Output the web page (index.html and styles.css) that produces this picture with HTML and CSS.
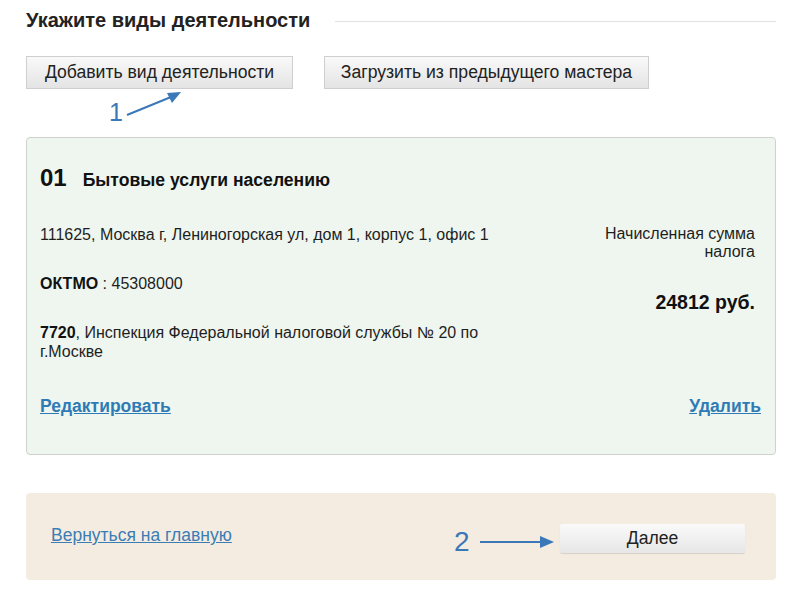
FILE: index.html
```html
<!DOCTYPE html>
<html lang="ru">
<head>
<meta charset="utf-8">
<link rel="stylesheet" href="styles.css">
</head>
<body>
<div class="page">
  <div class="heading">
    <h1 class="title">Укажите виды деятельности</h1>
    <div class="rule"></div>
  </div>
  <div class="actions">
    <button class="btn btn-add">Добавить вид деятельности</button>
    <button class="btn btn-load">Загрузить из предыдущего мастера</button>
  </div>

  <div class="card">
    <div class="card-head">
      <span class="code">01</span>
      <span class="name">Бытовые услуги населению</span>
    </div>
    <div class="card-body">
      <div class="info">
        <p class="line">111625, Москва г, Лениногорская ул, дом 1, корпус 1, офис 1</p>
        <p class="line"><b>ОКТМО</b> : 45308000</p>
        <p class="line"><b>7720</b>, Инспекция Федеральной налоговой службы № 20 по г.Москве</p>
      </div>
      <div class="sum">
        <p class="sum-label">Начисленная сумма<br>налога</p>
        <p class="sum-value">24812 руб.</p>
      </div>
    </div>
    <div class="card-links">
      <a class="link-bold" href="#">Редактировать</a>
      <a class="link-bold" href="#">Удалить</a>
    </div>
  </div>

  <div class="footer">
    <a class="link" href="#">Вернуться на главную</a>
    <button class="btn btn-next">Далее</button>
  </div>

  <div class="note note-1">
    <span class="note-num">1</span>
    <svg class="note-arrow" width="60" height="30" viewBox="0 0 60 30">
      <line x1="2" y1="26" x2="46" y2="8" stroke="#3a78b8" stroke-width="2"/>
      <polygon points="56,3 42,4 47,14" fill="#3a78b8"/>
    </svg>
  </div>
  <div class="note note-2">
    <span class="note-num">2</span>
    <svg class="note-arrow" width="76" height="16" viewBox="0 0 76 16">
      <line x1="0" y1="8" x2="62" y2="8" stroke="#3a78b8" stroke-width="2"/>
      <polygon points="74,8 60,2 60,14" fill="#3a78b8"/>
    </svg>
  </div>
</div>
</body>
</html>
```

FILE: styles.css
```css
* { box-sizing: border-box; }
html, body { margin: 0; padding: 0; background: #fff; }
body {
  font-family: "Liberation Sans", Arial, sans-serif;
  color: #1e1e1e;
}
.page {
  position: relative;
  width: 795px;
  padding: 8px 19px 0 26px;
}
.heading {
  display: flex;
  align-items: center;
  height: 24px;
}
.title {
  margin: 0;
  font-size: 20px;
  line-height: 24px;
  font-weight: bold;
  color: #222;
}
.rule {
  flex: 1;
  margin-left: 25px;
  border-top: 1px solid #e2e2e2;
  margin-top: 2px;
}
.actions {
  display: flex;
  gap: 31px;
  margin-top: 24px;
}
.btn {
  font-family: "Liberation Sans", Arial, sans-serif;
  font-size: 17.6px;
  color: #222;
  height: 33px;
  border: 1px solid #cfcfcf;
  border-radius: 0;
  background: linear-gradient(#f9f9f9, #e4e4e4);
  padding: 0;
  cursor: pointer;
}
.btn-add { width: 267px; }
.btn-load { width: 325px; }

.card {
  margin-top: 48px;
  height: 318px;
  border: 1px solid #cdd2ce;
  border-radius: 4px;
  background: #eef6ef;
  padding: 26px 14px 0 13px;
}
.card-head {
  display: flex;
  align-items: baseline;
  height: 28px;
}
.code {
  font-size: 24px;
  line-height: 28px;
  font-weight: bold;
  color: #111;
}
.name {
  margin-left: 16px;
  font-size: 17.6px;
  font-weight: bold;
  color: #111;
}
.card-body {
  display: flex;
  justify-content: space-between;
  margin-top: 33px;
}
.info { width: 470px; }
.line {
  margin: 0 0 30px;
  font-size: 16px;
  line-height: 19px;
}
.line:last-child { margin-bottom: 0; }
.line b { color: #111; }
.sum {
  text-align: right;
  margin-right: 6px;
}
.sum-label {
  margin: 0;
  font-size: 16px;
  line-height: 18px;
}
.sum-value {
  margin: 30px 0 0;
  font-size: 19.5px;
  line-height: 22px;
  font-weight: bold;
  color: #111;
}
.card-links {
  display: flex;
  justify-content: space-between;
  margin-top: 36px;
}
.link-bold {
  font-size: 17.5px;
  line-height: 19px;
  font-weight: bold;
  color: #2f7bb5;
  text-decoration: underline;
}

.footer {
  margin-top: 38px;
  height: 87px;
  background: #f4ece1;
  border-radius: 4px;
  display: flex;
  align-items: center;
  justify-content: space-between;
  padding: 0 31px 0 25px;
}
.link {
  font-size: 17.5px;
  color: #3b7db5;
  text-decoration: underline;
  margin-top: -2px;
}
.btn-next {
  width: 185px;
  height: 29px;
  border: none;
  border-radius: 2px;
  background: linear-gradient(#fafafa, #e6e6e6);
  box-shadow: 0 1px 1px rgba(0,0,0,0.12);
  margin-top: 3px;
}

.note {
  position: absolute;
  display: flex;
  align-items: flex-end;
  color: #3a78b8;
}
.note-num {
  font-size: 25px;
  line-height: 25px;
  font-weight: normal;
}
.note-1 { left: 109px; top: 89px; }
.note-1 .note-arrow { margin-left: 2px; margin-bottom: 6px; }
.note-2 { left: 454px; top: 528px; align-items: center; }
.note-2 .note-num { font-size: 28px; line-height: 28px; }
.note-2 .note-arrow { margin-left: 10px; }
```
